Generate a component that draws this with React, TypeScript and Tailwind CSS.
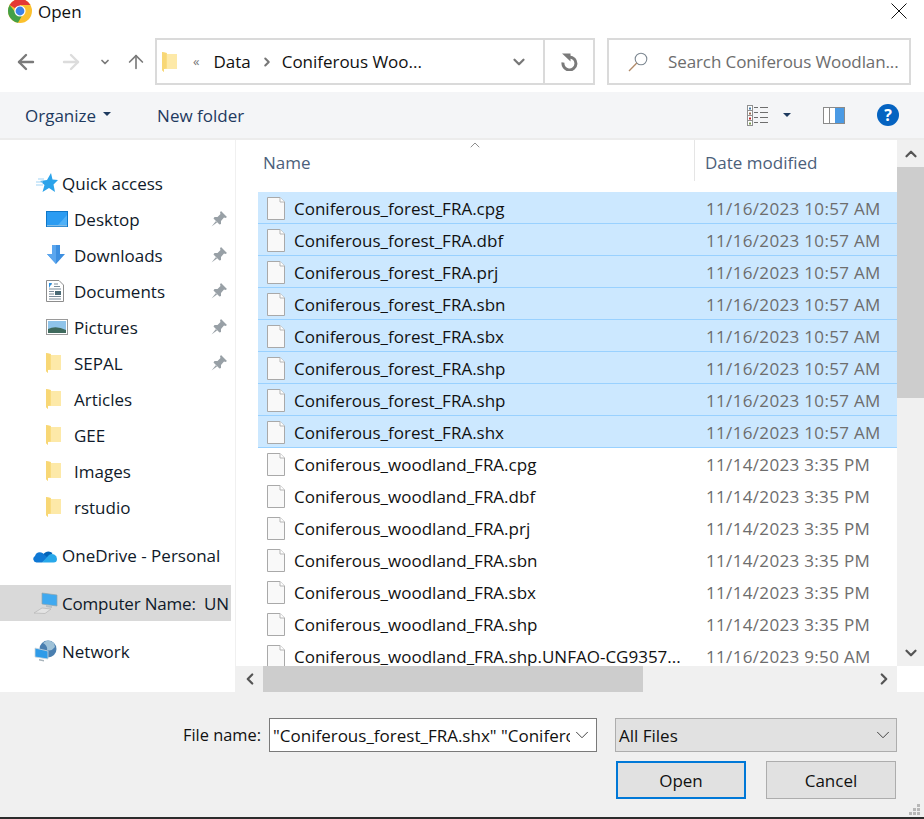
import { ArrowLeft, ArrowRight, ArrowUp, ChevronDown, ChevronLeft, ChevronRight, ChevronUp } from "lucide-react";
import type { JSX } from "react";

const forest = ["cpg", "dbf", "prj", "sbn", "sbx", "shp", "shp", "shx"].map((e) => `Coniferous_forest_FRA.${e}`);
const woodland = ["cpg", "dbf", "prj", "sbn", "sbx", "shp"].map((e) => `Coniferous_woodland_FRA.${e}`);

function Chrome() {
  return (
    <svg width="24" height="24" viewBox="0 0 24 24">
      <circle cx="12" cy="12" r="12" fill="#fbc02d" />
      <path d="M12 12 L1.6 6 A12 12 0 0 1 22.4 6 L12 6 Z" fill="#e53935" />
      <path d="M1.6 6 A12 12 0 0 0 10 23.8 L15.5 14 L12 16 L8 14 Z" fill="#43a047" />
      <circle cx="12" cy="12" r="5.6" fill="#fff" />
      <circle cx="12" cy="12" r="4.4" fill="#3b82e6" />
    </svg>
  );
}

function Folder() {
  return (
    <svg width="15" height="22" viewBox="0 0 15 22">
      <path d="M0 1 L5 2 L5 3 L15 3 L15 18 L2 18 L2 21 L0 19 Z" fill="#fbe08f" />
      <path d="M0 1 L4.5 2 L4.5 17 L2 18 L2 21 L0 19 Z" fill="#f8d775" />
      <path d="M5 3 L15 3 L15 18 L5 18 Z" fill="#fde9a8" />
    </svg>
  );
}

function FileIcon() {
  return (
    <svg width="18" height="23" viewBox="0 0 18 23">
      <path d="M.5.5 H13 L17.5 5 V22.5 H.5 Z" fill="#f9f9f9" stroke="#a9a9a9" />
      <path d="M13 .5 V5 H17.5" fill="#fff" stroke="#b5b5b5" />
    </svg>
  );
}

function Pin() {
  return (
    <svg width="16" height="16" viewBox="0 0 16 16">
      <path d="M10 0 L16 6 L14.5 7 L13 6.5 L10 10 L10 13 L8.5 13.5 L2.5 7.5 L3.5 6 L6.5 6 L9.5 3 L9 1.5 Z" fill="#98a0a6" />
      <path d="M5 10 L0.5 15.5 L6 11.5 Z" fill="#98a0a6" />
    </svg>
  );
}

function Star() {
  return (
    <svg width="22" height="20" viewBox="0 0 22 20">
      <path d="M15 0 L16.5 6.5 L22 7 L17.5 11.5 L19 19 L13 15 L6.5 19 L8.5 12 L4 8 L11 7 Z" fill="#2ba3ea" />
      <path d="M0 9 H7 M2 6 H8 M0 12 H7" stroke="#9fd3f5" strokeWidth="1" />
    </svg>
  );
}

function Desktop() {
  return (
    <svg width="22" height="16" viewBox="0 0 22 16">
      <rect width="22" height="16" fill="#0f77c8" />
      <rect x="1" y="1" width="20" height="13" fill="#2b9cf2" />
      <path d="M12 14 L21 4 V14 Z" fill="#4eb0f7" />
      <rect x="1" y="14.4" width="20" height=".8" fill="#cfe9fb" />
    </svg>
  );
}

function Download() {
  return (
    <svg width="20" height="20" viewBox="0 0 20 20">
      <path d="M6 0 H14 V9 H19 L10 19 L1 9 H6 Z" fill="#3d8fe0" />
      <path d="M6 0 H10 V19 L1 9 H6 Z" fill="#5ba6ee" />
    </svg>
  );
}

function Documents() {
  return (
    <svg width="18" height="22" viewBox="0 0 18 22">
      <path d="M.5.5 H13 L17.5 5 V21.5 H.5 Z" fill="#fff" stroke="#8d8d8d" />
      <path d="M3 4 H6 M8 4 H12 M8 6.5 H14 M3 9 H15 M3 11.5 H8 M3 14 H8 M3 16.5 H15 M3 19 H15" stroke="#7a8b99" />
      <path d="M3 3 L6 3 L3 8 Z" fill="#2b8fe0" />
      <rect x="9" y="11" width="6" height="4" fill="#4a6a75" />
    </svg>
  );
}

function Pictures() {
  return (
    <svg width="22" height="16" viewBox="0 0 22 16">
      <rect x=".5" y=".5" width="21" height="15" fill="#fff" stroke="#9a9a9a" />
      <rect x="2" y="2" width="18" height="12" fill="#8fc4ea" />
      <path d="M2 10 Q10 6 20 11 V14 H2 Z" fill="#3f6a5d" />
    </svg>
  );
}

function OneDrive() {
  return (
    <svg width="24" height="16" viewBox="0 0 24 16">
      <path d="M9 12 A6.5 6.5 0 0 1 19.5 6 L14 14 Z" fill="#0364b8" />
      <path d="M3.5 15.5 A3.5 3.5 0 0 1 2 9 A5 5 0 0 1 9.5 6 L15 11 L9 15.5 Z" fill="#0f78d4" />
      <path d="M9 15.5 L16 8 A5 5 0 0 1 24 12 A3.5 3.5 0 0 1 20.5 15.5 Z" fill="#28a8ea" />
    </svg>
  );
}

function Computer() {
  return (
    <svg width="24" height="22" viewBox="0 0 24 22" className="shrink-0">
      <path d="M8 1 L23 3 L23 14 L8 12 Z" fill="#3fa9f0" stroke="#8fa5ad" strokeWidth=".7" />
      <path d="M12 13 L18 14 L18 16 L12 15 Z" fill="#b9c0c4" />
      <path d="M0 21 L8 16 L17 17 L11 21.5 Z" fill="#e4e4e4" stroke="#b5b5b5" strokeWidth=".7" />
    </svg>
  );
}

function Network() {
  return (
    <svg width="24" height="22" viewBox="0 0 24 22" className="shrink-0">
      <circle cx="14" cy="9" r="8.5" fill="#4a7fb0" />
      <path d="M9 3 Q14 6 13 10 Q17 12 21 7 L20 3 Q14 -2 9 3 Z" fill="#9fc2d8" />
      <path d="M1 8 L14 11 V19 L1 17 Z" fill="#2f9be8" stroke="#d0d8dc" strokeWidth=".8" />
      <path d="M5 19 L10 20 V21.5 L5 20.5 Z" fill="#a9b4bb" />
    </svg>
  );
}

function ViewIcon() {
  return (
    <svg width="22" height="21" viewBox="0 0 22 21">
      <rect x=".5" y=".5" width="5" height="20" fill="#fff" stroke="#8f8f8f" />
      <path d="M1 5.5 H5 M1 10.5 H5 M1 15.5 H5" stroke="#8f8f8f" />
      <rect x="2" y="2.5" width="2" height="2" fill="#4a7ea8" />
      <rect x="2" y="7.5" width="2" height="2" fill="#9a6a50" />
      <rect x="2" y="12.5" width="2" height="2" fill="#c02828" />
      <rect x="2" y="17.5" width="2" height="2" fill="#7a9a50" />
      <path d="M7 2.5 H11 M13 2.5 H21 M7 7.5 H11 M13 7.5 H21 M7 12.5 H11 M13 12.5 H21 M7 17.5 H11 M13 17.5 H21" stroke="#6e6e6e" />
    </svg>
  );
}

function PaneIcon() {
  return (
    <svg width="22" height="17" viewBox="0 0 22 17">
      <rect x=".5" y=".5" width="21" height="16" fill="#fff" stroke="#8a8a8a" />
      <path d="M6.5 1 V16" stroke="#8a8a8a" />
      <rect x="12" y="1" width="9" height="15" fill="#4a9ae4" />
    </svg>
  );
}

function Refresh() {
  return (
    <svg width="18" height="18" viewBox="0 0 18 18">
      <path d="M9.5 4 A6.5 6.5 0 1 1 3 9.5" fill="none" stroke="#7a7a7a" strokeWidth="3" />
      <path d="M2 0.5 L10.5 0.5 L10.5 8.5 Z" fill="#7a7a7a" />
    </svg>
  );
}

function SearchGlass() {
  return (
    <svg width="20" height="20" viewBox="0 0 20 20">
      <circle cx="13" cy="7" r="5.8" fill="none" stroke="#7d8892" strokeWidth="1.1" />
      <path d="M8.8 11 L1 19" stroke="#b08a68" strokeWidth="1.3" />
    </svg>
  );
}

function CloseX() {
  return (
    <svg width="16" height="16" viewBox="0 0 16 16">
      <path d="M.5.5 L15.5 15.5 M15.5.5 L.5 15.5" stroke="#111" strokeWidth="1" />
    </svg>
  );
}

function Grip() {
  return (
    <svg width="12" height="12" viewBox="0 0 12 12">
      <path d="M8 0 h3 v3 h-3 Z M4 4 h3 v3 h-3 Z M8 4 h3 v3 h-3 Z M0 8 h3 v3 h-3 Z M4 8 h3 v3 h-3 Z M8 8 h3 v3 h-3 Z" fill="#b8b8b8" />
    </svg>
  );
}

function Caret() {
  return <span className="inline-block w-0 h-0 border-x-[4px] border-x-transparent border-t-[4px] border-t-[#1e3a5f]" />;
}

type NavItem = { icon: JSX.Element; label: string; pin?: boolean };

const quick: NavItem[] = [
  { icon: <Desktop />, label: "Desktop", pin: true },
  { icon: <Download />, label: "Downloads", pin: true },
  { icon: <Documents />, label: "Documents", pin: true },
  { icon: <Pictures />, label: "Pictures", pin: true },
  { icon: <Folder />, label: "SEPAL", pin: true },
  { icon: <Folder />, label: "Articles" },
  { icon: <Folder />, label: "GEE" },
  { icon: <Folder />, label: "Images" },
  { icon: <Folder />, label: "rstudio" },
];

function Row({ name, date, selected }: { name: string; date: string; selected?: boolean }) {
  return (
    <div className={`h-[32px] pt-[2px] flex items-center ml-[22px] border-b ${selected ? "bg-[#cce8ff] border-[#99d1ff]" : "border-transparent"}`}>
      <div className="w-[36px] pl-[9px] flex shrink-0">
        <FileIcon />
      </div>
      <div className="w-[412px] shrink-0 whitespace-nowrap">{name}</div>
      <div className="text-[#6d6d6d] whitespace-nowrap tracking-[0.33px]">{date}</div>
    </div>
  );
}

export default function App() {
  return (
    <div className="w-[924px] h-[819px] overflow-hidden flex flex-col bg-white text-[17px] text-[#111] font-['Open_Sans','Noto_Sans',sans-serif] leading-none">
      {/* title bar */}
      <div className="h-[38px] flex items-start pl-[8px] pr-[17px] shrink-0">
        <div className="-mt-[1px]">
          <Chrome />
        </div>
        <span className="ml-[6px] mt-[3px] text-[17px]">Open</span>
        <span className="ml-auto mt-[3px] flex">
          <CloseX />
        </span>
      </div>

      {/* address row */}
      <div className="h-[54px] flex items-start shrink-0">
        <div className="w-[155px] flex items-center pl-[14px] h-[47px] text-[#7a7a7a] shrink-0">
          <ArrowLeft size={24} strokeWidth={2.4} />
          <ArrowRight size={24} strokeWidth={2.4} className="ml-[21px] text-[#dcdcdc]" />
          <ChevronDown size={12} strokeWidth={3.5} className="ml-[16px]" />
          <ArrowUp size={22} strokeWidth={1.8} className="ml-[14px]" />
        </div>
        <div className="w-[440px] h-[47px] border-2 border-[#dadada] flex items-center shrink-0">
          <div className="pl-[5px]">
            <Folder />
          </div>
          <span className="ml-[16px] text-[#777] text-[13px]">«</span>
          <span className="ml-[14px]">Data</span>
          <ChevronRight size={14} strokeWidth={3.5} className="ml-[9px] text-[#777]" />
          <span className="ml-[8px] tracking-[-0.03px]">Coniferous Woo...</span>
          <div className="ml-auto flex items-center h-full">
            <ChevronDown size={18} strokeWidth={3} className="mr-[15px] text-[#777]" />
            <div className="w-[50px] h-full border-l-2 border-[#dadada] flex items-center justify-center">
              <Refresh />
            </div>
          </div>
        </div>
        <div className="ml-[12px] w-[304px] h-[47px] border-2 border-[#dadada] flex items-center shrink-0">
          <span className="ml-[19px] flex">
            <SearchGlass />
          </span>
          <span className="ml-[20px] text-[#6d6d6d] whitespace-nowrap tracking-[-0.1px]">Search Coniferous Woodlan...</span>
        </div>
      </div>

      {/* toolbar */}
      <div className="h-[48px] bg-[#f4f5f7] border-b-2 border-[#ececec] flex items-center shrink-0 text-[#1e3a5f]">
        <span className="ml-[25px]">Organize</span>
        <span className="ml-[7px] mb-[2px] flex">
          <Caret />
        </span>
        <span className="ml-[46px]">New folder</span>
        <div className="ml-auto flex items-center pr-[25px]">
          <ViewIcon />
          <span className="ml-[14px] flex">
            <Caret />
          </span>
          <span className="ml-[32px] flex">
            <PaneIcon />
          </span>
          <span className="ml-[32px] w-[22px] h-[22px] rounded-full bg-[#0563c1] text-white font-bold text-[16px] flex items-center justify-center">?</span>
        </div>
      </div>

      {/* main */}
      <div className="flex h-[552px] shrink-0">
        <div className="w-[231px] shrink-0 pt-[25px] text-[#0f1a2a]">
          <div className="h-[36px] flex items-center pl-[36px] gap-[4px]">
            <Star />
            <span>Quick access</span>
          </div>
          {quick.map((q) => (
            <div key={q.label} className="h-[36px] flex items-center">
              <div className="w-[74px] pl-[46px] flex justify-start shrink-0">{q.icon}</div>
              <span>{q.label}</span>
              {q.pin && (
                <span className="ml-auto mr-[4px] flex">
                  <Pin />
                </span>
              )}
            </div>
          ))}
          <div className="h-[12px]" />
          <div className="h-[36px] flex items-center pl-[33px] gap-[5px]">
            <OneDrive />
            <span>OneDrive - Personal</span>
          </div>
          <div className="h-[12px]" />
          <div className="h-[36px] flex items-center pl-[34px] gap-[4px] bg-[#d9d9d9] whitespace-nowrap">
            <Computer />
            <span className="whitespace-pre tracking-[-0.2px]">Computer Name:  UN</span>
          </div>
          <div className="h-[12px]" />
          <div className="h-[36px] flex items-center pl-[34px] gap-[4px]">
            <Network />
            <span>Network</span>
          </div>
        </div>
        <div className="w-[5px] shrink-0 bg-white border-r border-[#f0f0f0]" />

        <div className="flex-1 flex flex-col min-w-0">
          <div className="flex-1 flex min-h-0">
            <div className="w-[661px] shrink-0 overflow-hidden">
              <div className="h-[41px] flex relative text-[#4c607a]">
                <div className="w-[459px] pl-[27px] pt-[4px] flex items-center border-r border-[#e5e5e5] shrink-0">Name</div>
                <div className="pl-[10px] pt-[4px] flex items-center">Date modified</div>
                <ChevronUp size={16} strokeWidth={1} className="absolute left-[231px] -top-[3px] text-[#555]" />
              </div>
              <div className="h-[11px]" />
              {forest.map((n, i) => (
                <Row key={i} name={n} date="11/16/2023 10:57 AM" selected />
              ))}
              {woodland.map((n, i) => (
                <Row key={i} name={n} date="11/14/2023 3:35 PM" />
              ))}
              <Row name="Coniferous_woodland_FRA.shp.UNFAO-CG9357..." date="11/16/2023 9:50 AM" />
            </div>
            <div className="w-[27px] shrink-0 flex flex-col bg-[#f0f0f0]">
              <div className="h-[27px] flex items-center justify-center shrink-0">
                <ChevronUp size={18} strokeWidth={3} className="text-[#555]" />
              </div>
              <div className="h-[231px] bg-[#cdcdcd] shrink-0" />
              <div className="flex-1" />
              <div className="h-[26px] flex items-center justify-center shrink-0">
                <ChevronDown size={18} strokeWidth={3} className="text-[#555]" />
              </div>
            </div>
          </div>
          <div className="h-[26px] shrink-0 flex">
            <div className="w-[661px] bg-[#f0f0f0] flex items-center shrink-0">
              <div className="w-[27px] flex justify-center shrink-0">
                <ChevronLeft size={18} strokeWidth={3} className="text-[#555]" />
              </div>
              <div className="w-[380px] h-full bg-[#cdcdcd] shrink-0" />
              <div className="flex-1" />
              <div className="w-[27px] flex justify-center shrink-0">
                <ChevronRight size={18} strokeWidth={3} className="text-[#555]" />
              </div>
            </div>
          </div>
        </div>
      </div>

      {/* bottom */}
      <div className="flex-1 bg-[#f0f0f0] flex flex-col items-end pr-[27px] pt-[26px] relative">
        <div className="flex items-center h-[34px]">
          <span className="text-[16.4px]">File name:</span>
          <div className="ml-[8px] w-[328px] h-[34px] bg-white border border-[#7a7a7a] flex items-center pl-[3px] overflow-hidden">
            <span className="w-[297px] overflow-hidden whitespace-nowrap shrink-0">"Coniferous_forest_FRA.shx" "Conifero</span>
            <ChevronDown size={22} strokeWidth={1} className="ml-[1px] shrink-0 text-[#333]" />
          </div>
          <div className="ml-[18px] w-[282px] h-[34px] bg-[#e1e1e1] border border-[#adadad] flex items-center pl-[3px]">
            <span>All Files</span>
            <ChevronDown size={22} strokeWidth={1} className="ml-auto mr-[2px] text-[#333]" />
          </div>
        </div>
        <div className="flex mt-[9px] gap-[20px] mr-[1px]">
          <div className="w-[130px] h-[38px] bg-[#e1e1e1] border-2 border-[#0078d7] flex items-center justify-center">Open</div>
          <div className="w-[130px] h-[38px] bg-[#e1e1e1] border border-[#adadad] flex items-center justify-center">Cancel</div>
        </div>
        <span className="absolute right-[3px] bottom-[1px] flex">
          <Grip />
        </span>
      </div>
      <div className="h-[2px] bg-[#2c2c2c] shrink-0" />
    </div>
  );
}
